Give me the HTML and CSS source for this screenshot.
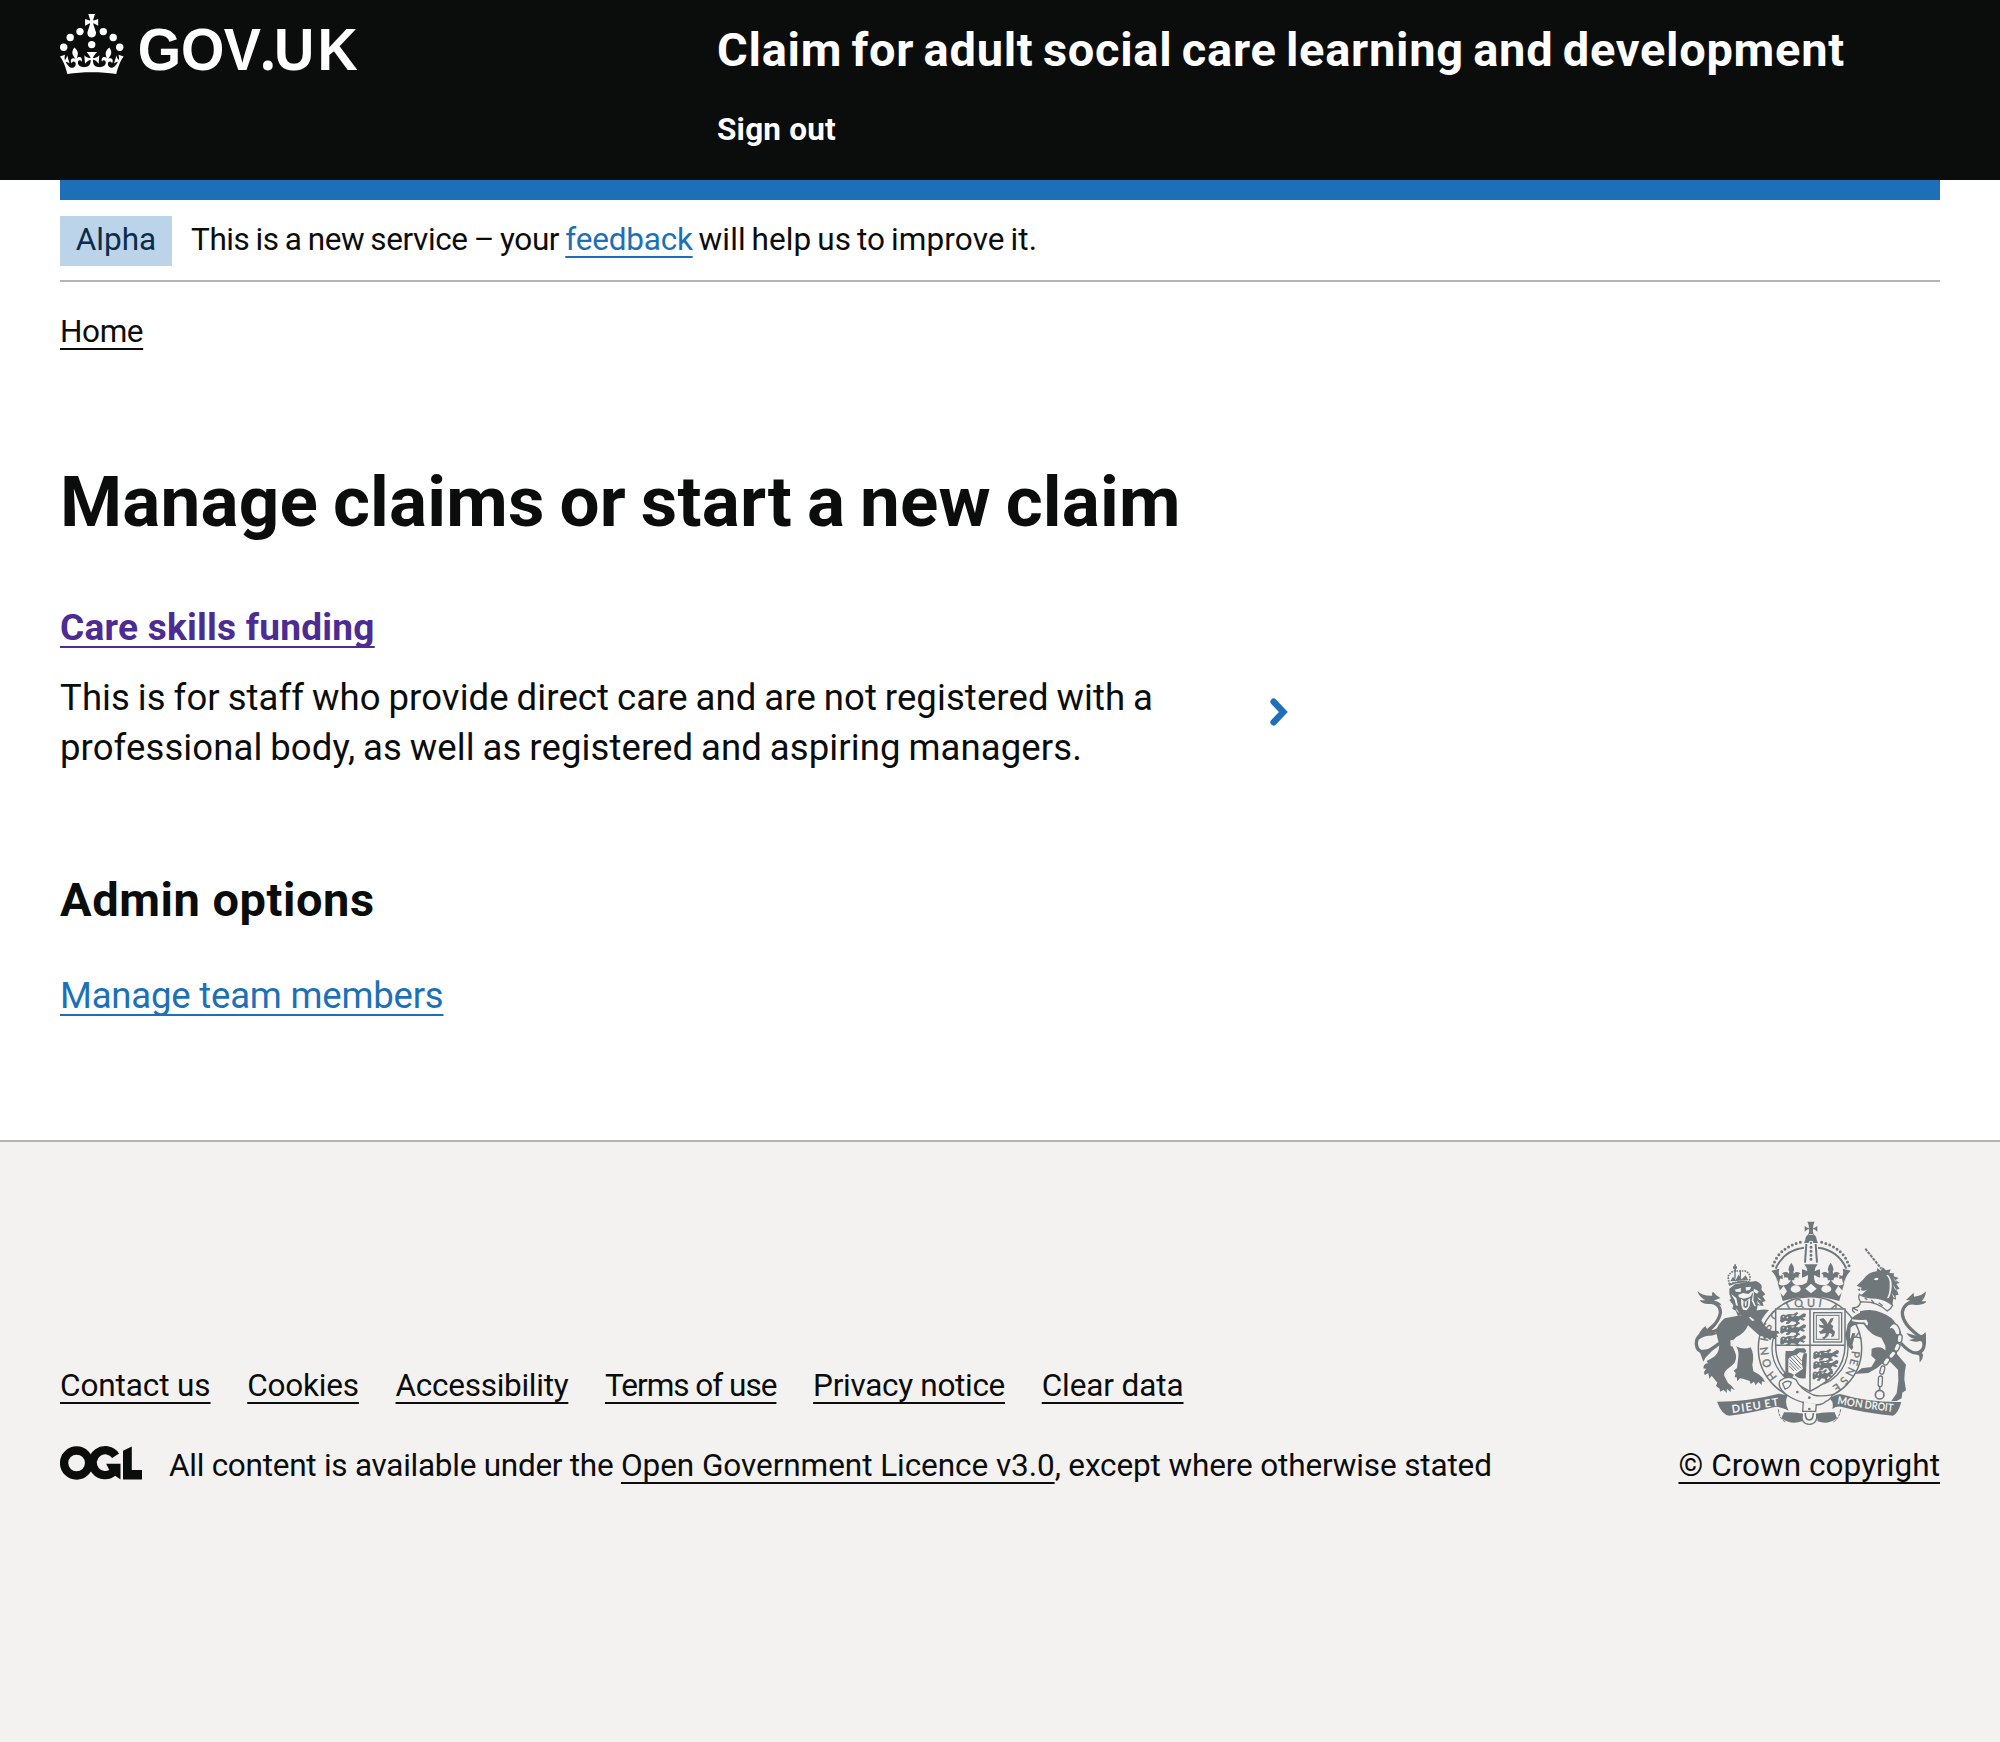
FILE: index.html
```html
<!DOCTYPE html>
<html lang="en">
<head>
<meta charset="utf-8">
<title>Manage claims or start a new claim</title>
<link rel="stylesheet" href="styles.css">
</head>
<body>
<header class="header">
  <a class="logo" href="#" aria-label="GOV.UK">
    <svg width="324" height="60" viewBox="0 0 324 60" fill="currentColor">
      <circle cx="20" cy="17.6" r="3.7"/><circle cx="10.2" cy="23.5" r="3.7"/><circle cx="3.7" cy="33.2" r="3.7"/><circle cx="31.7" cy="30.6" r="3.7"/><circle cx="43.3" cy="17.6" r="3.7"/><circle cx="53.2" cy="23.5" r="3.7"/><circle cx="59.7" cy="33.2" r="3.7"/>
      <path d="M33.1,9.8c.2-.1.3-.3.5-.5l4.6,2.4v-6.8l-4.6,1.5c-.1-.2-.3-.3-.5-.5l1.9-5.9h-6.7l1.9,5.9c-.2.1-.3.3-.5.5l-4.6-1.5v6.8l4.6-2.4c.1.2.3.3.5.5l-2.6,8c-.9,2.8,1.2,5.7,4.1,5.7h0c3,0,5.1-2.9,4.1-5.7l-2.6-8ZM37,37.9s-3.4,3.8-4.1,6.1c2.2,0,4.2-.5,6.4-2.8l-.7,8.5c-2-2.8-4.4-4.1-5.7-3.8.1,3.1.5,6.7,5.8,7.2,3.7.3,6.7-1.5,7-3.8.4-2.6-2-4.3-3.7-1.6-1.4-4.5,2.4-6.1,4.9-3.2-1.9-4.5-1.8-7.7,2.4-10.9,3,4,2.6,7.3-1.2,11.1,2.4-1.3,6.2,0,4,4.6-1.2-2.8-3.7-2.2-4.2.2-.3,1.7.7,3.7,3,4.2,1.9.3,4.7-.9,7-5.9-1.3,0-2.4.7-3.9,1.7l2.4-8c.6,2.3,1.4,3.7,2.2,4.5.6-1.6.5-2.8,0-5.3l5,1.8c-2.6,3.6-5.2,8.7-7.3,17.5-7.4-1.1-15.7-1.7-24.5-1.7h0c-8.8,0-17.1.6-24.5,1.7-2.1-8.9-4.7-13.9-7.3-17.5l5-1.8c-.5,2.5-.6,3.7,0,5.3.8-.8,1.6-2.3,2.2-4.5l2.4,8c-1.5-1-2.6-1.7-3.9-1.7,2.3,5,5.2,6.2,7,5.9,2.3-.4,3.3-2.4,3-4.2-.5-2.4-3-3.1-4.2-.2-2.2-4.6,1.6-6,4-4.6-3.7-3.7-4.2-7.1-1.2-11.1,4.2,3.2,4.3,6.4,2.4,10.9,2.5-2.8,6.3-1.3,4.9,3.2-1.8-2.7-4.1-1-3.7,1.6.3,2.3,3.3,4.1,7,3.8,5.4-.5,5.7-4.2,5.8-7.2-1.3-.2-3.7,1-5.7,3.8l-.7-8.5c2.2,2.3,4.2,2.7,6.4,2.8-.7-2.3-4.1-6.1-4.1-6.1h10.6,0Z"/>
      <text class="wordmark" transform="scale(.93 1)" y="56" x="83.5 130 176 215 230 277">GOV<tspan class="wordmark-dot">.</tspan>UK</text>
    </svg>
  </a>
  <div class="header-content">
    <a class="service-name" href="#">Claim for adult social care learning and development</a>
    <a class="sign-out" href="#">Sign out</a>
  </div>
</header>

<div class="container">
  <div class="phase-banner">
    <strong class="tag">Alpha</strong>
    <span class="phase-text"><span class="phase-lead">This is a new service – your </span><a class="link feedback" href="#">feedback</a><span class="phase-tail"> will help us to improve it.</span></span>
  </div>
  <nav class="breadcrumbs"><a class="link" href="#">Home</a></nav>
  <main class="main">
    <h1>Manage claims or start a new claim</h1>
    <section class="card">
      <div class="card-text">
        <h2 class="card-title"><a class="link" href="#">Care skills funding</a></h2>
        <p>This is for staff who provide direct care and are not registered with a<br>professional body, as well as registered and aspiring managers.</p>
      </div>
      <svg class="chevron" width="18" height="28" viewBox="0 0 18 28" fill="none" stroke="currentColor" stroke-width="6.4" stroke-linecap="round"><path d="M3.6 3.7 13.4 14 3.6 24.3"/></svg>
    </section>
    <h2 class="admin-title">Admin options</h2>
    <p class="admin-link"><a class="link" href="#">Manage team members</a></p>
  </main>
</div>

<footer class="footer">
  <div class="footer-meta">
    <ul class="footer-links">
      <li><a class="link contact" href="#">Contact us</a></li>
      <li><a class="link cookies" href="#">Cookies</a></li>
      <li><a class="link access" href="#">Accessibility</a></li>
      <li><a class="link terms" href="#">Terms of use</a></li>
      <li><a class="link privacy" href="#">Privacy notice</a></li>
      <li><a class="link clear" href="#">Clear data</a></li>
    </ul>
    <div class="licence">
      <svg class="ogl" width="82" height="34" viewBox="0 0 82 34" role="img" aria-label="OGL">
        <g fill="none" stroke="currentColor" stroke-width="8.3"><circle cx="16.6" cy="17" r="12.5"/><path d="M55.6 9.8A12.5 12.5 0 1 0 53.5 26"/></g>
        <path fill="currentColor" d="M46.2 17.8h14.3v15.6L55.5 30l-6-5.5zM63 4.8 71.8.6V24H82v9.4H63z"/>
      </svg>
      <p><span class="lic-lead">All content is available under the </span><a class="link lic-link" href="#">Open Government Licence v3.0</a><span class="lic-tail">, except where otherwise stated</span></p>
    </div>
  </div>
  <div class="copyright">
    <svg class="arms" width="232" height="205" viewBox="72 35 696 615" fill="currentColor">
      <defs>
        <g id="crown-half">
          <path d="M423 74c-10 0-17 7-17 17l-4 10h21zM423 76h-9q5-10 3-17-6 1-13 8v-17q7 6 13 7 1-9-5-20h11z"/>
          <path d="M402 115Q342 122 317 178" fill="none" stroke="currentColor" stroke-width="6"/>
          <path d="M391 99Q323 116 307 176" fill="none" stroke="currentColor" stroke-width="9" stroke-linecap="round" stroke-dasharray="0 12.6"/>
          <path d="M405 160 409 104" fill="none" stroke="currentColor" stroke-width="6"/>
          <path d="M318 205Q322 232 342 228 360 224 364 208 368 228 386 228 412 226 423 205V262Q380 262 338 275L328 238z"/>
          <path d="M364 160q-13 17-6 27-3 8-3 26h18q0-18-3-26 7-10-6-27z"/>
          <path d="M359 201q-4-21-23-9 8 3 6 13 9-4 17 6zM369 201q4-21 23-9-8 3-6 13-9-4-17 6z"/>
          <path d="M423 165h-20q8 9 9 21-7-5-16-6v25q10-3 17-8 3 10-3 22h13z"/>
          <path d="M304 184l24-6q-4 16 2 22 4-1 8-4v14q-5-3-8-2l-4 18q-6-26-22-42z"/>
        </g>
        <g id="beast">
          <path d="M0 5Q5-5 16 1q8-6 22-3l12-7 4 4-8 8 10 1 14-9 7 2-2 9-9 2 9 6-6 3-10-4-6 7q8 3 5 7l-9 1-4-8-12-1-7 7-9 1 1-6 6-2q-9-4-14 1l-5 3q-8-3-5-9z"/>
          <path class="arms-hole" d="M6 5l6-2-2 5zM20 3l4 5-5 3zM30 2l14-1-6 4z"/>
        </g>
      </defs>

      <!-- garter -->
      <g fill="none" stroke="currentColor">
        <circle cx="420" cy="417" r="155" stroke-width="4.5"/>
        <circle cx="420" cy="417" r="114" stroke-width="4"/>
      </g>
      <g class="motto garter-motto">
        <text transform="translate(322 503) rotate(232)">H</text>
        <text transform="translate(306 469) rotate(248)">O</text>
        <text transform="translate(296 436) rotate(262)">N</text>
        <text transform="translate(293 397) rotate(280)">I</text>
        <text transform="translate(300 365) rotate(294)">S</text>
        <text transform="translate(316 335) rotate(310)">O</text>
        <text transform="translate(350 304) rotate(333)">T</text>
        <text transform="translate(376 296) rotate(346)">Q</text>
        <text transform="translate(411 292)">U</text>
        <text transform="translate(444 292) rotate(10)">I</text>
        <text transform="translate(478 301) rotate(27)">A</text>
        <text transform="translate(544 376) rotate(70)">Y</text>
        <text transform="translate(546 424) rotate(96)">P</text>
        <text transform="translate(543 447) rotate(104)">E</text>
        <text transform="translate(536 471) rotate(116)">N</text>
        <text transform="translate(520 500) rotate(130)">S</text>
        <text transform="translate(502 521) rotate(145)">E</text>
      </g>

      <!-- crown -->
      <use href="#crown-half"/><use href="#crown-half" transform="matrix(-1 0 0 1 846 0)"/>
      <path d="M423 102v55" stroke="currentColor" stroke-width="9" stroke-linecap="round" stroke-dasharray="0 12" fill="none"/>
      <g class="arms-hole"><circle cx="423" cy="101" r="7"/><ellipse cx="377" cy="239" rx="15" ry="11"/><ellipse cx="469" cy="239" rx="15" ry="11"/><path d="M406 238l17-15 17 15-17 14zM327 246l14-16 10 16-11 15zM519 246l-14-16-10 16 11 15z"/></g>
      <circle cx="423" cy="101" r="3.5"/>

      <!-- shield -->
      <path class="arms-hole" d="M317 298h208v110c0 72-48 112-105 140-57-28-103-68-103-140z"/>
      <path fill="none" stroke="currentColor" stroke-width="4.5" d="M317 299h208v109c0 72-48 110-105 138-57-28-103-66-103-138zM420 299v247M317 408h208"/>
      <g fill="none" stroke="currentColor"><rect x="431" y="310" width="84" height="88" stroke-width="4"/><rect x="439" y="318" width="68" height="72" stroke-width="3"/></g>
      <use href="#beast" transform="translate(331 317)"/><use href="#beast" transform="translate(331 350)"/><use href="#beast" transform="translate(331 383)"/>
      <use href="#beast" transform="translate(430 427)"/><use href="#beast" transform="translate(430 457) scale(.98 1)"/><use href="#beast" transform="translate(428 488) scale(.8 1)"/>
      <path d="M448 330l12-4 8 8 5 10 8-16 10-3-3 9-6 9 8 8-3 8 8 8-3 14-9 3 3-10-8-3-4 10-12 9-6-5 9-5 3-9-16 3-6-8 7-1 8-8-12-3-3-9 6 2 10 1z"/>
      <path d="M347 425h22l10-8h24l6 7-4 7-16-2-10 8q-18 2-24 12v40q12 3 17 8l-6 9-12-5-9 7-8-11 9-9v-50z"/>
      <path d="M401 432q-10 26-2 46l-26 18q12 14 34 11l4-75z"/>
      <path fill="none" stroke="currentColor" stroke-width="3" d="M361 443l32 34M359 451l28 30M358 460l22 24M370 440l25 27M379 438l16 17M358 470l14 15"/>

      <!-- belt and buckle -->
      <path class="arms-hole" stroke="currentColor" stroke-width="4" d="M330 514q24-18 48-3 11 27 52 46 22 6 58-1-6 14-20 20-12 12-30 10-72-8-102-43-13-14-6-29z"/>
      <path class="arms-hole" stroke="currentColor" stroke-width="4" d="M338 523q10-12 26-4-4 17-19 20zM400 577l-2 29h39l2-22"/>
      <circle cx="382" cy="548" r="4"/><circle cx="418" cy="565" r="4"/><circle cx="418" cy="599" r="4"/>
      <path d="M342 609q37-2 57 5l-3 22q-33 12-62-9zM494 609q-37-2-55 5l4 22q30 12 58-9z"/>
      <path d="M396 612q-4 32 22 33 26-1 22-33" fill="none" stroke="currentColor" stroke-width="4"/>
      <path d="M406 611q-1 20 12 21 12-1 12-21" fill="none" stroke="currentColor" stroke-width="5"/>
      <path d="M325 600q3 30 22 38M512 600q-5 30-22 38" fill="none" stroke="currentColor" stroke-width="3" stroke-dasharray="9 3"/>

      <!-- motto scroll -->
      <path d="M139 577q95 0 188-24l27 5q-13 18 2 46-28-14-42-11-73 19-136 26-22-2-37-42zM694 578q-94 2-184-24-20 3-30 14 12 10 7 31 12-9 26-7 76 20 156 27 15-5 25-41z"/>
      <g class="motto scroll-motto"><text transform="translate(187 611) rotate(-8)" textLength="88">DIEU</text><text transform="translate(285 595) rotate(-9)" textLength="43">ET</text><text transform="translate(501 584) rotate(9)" textLength="76" lengthAdjust="spacingAndGlyphs">MON</text><text transform="translate(583 597) rotate(7)" textLength="86" lengthAdjust="spacingAndGlyphs">DROIT</text></g>

      <!-- lion -->
      <path fill="none" stroke="currentColor" stroke-width="10" d="M148 402Q118 426 102 429C74 425 72 391 94 374 122 363 146 338 151 311 153 284 130 278 106 276"/>
      <path d="M82 244q13 16 45 15-4-7 2-12 9 12 22 19-9 4-20 8 18 2 24 15-20-9-36-5-21 2-30-11 10 0 18 0-20-10-25-29zM106 351q6 13 18 11 10 2 30-15-8 20-21 23 12-1 20-5-18 15-37 14-19 2-31 13 1-30 21-41zM88 423q4 14 12 34 5-13 12-18l22-22z"/>
      <path d="M178 238l18-14 62-9q23 10 16 26l12 14-8 6 9 14-10 3 4 12-18-2-4 20-18 14-19 2-8-8-10 5-7-17-10-6 3-10-12-16 5-4-5-14z"/>
      <g class="arms-hole"><path d="M194 241l19-5-1 12-14-1zM227 234l16-2-3 9-12 3zM213 268l12 9 16-11-2 25-9 12-11-2-5-13zM205 256l14-5 16 3 12-9 3 3-10 15-18 5-15-4zM183 254l16 12 5 24-6-2-4-16zM252 238l14 8-4 7-10-5-2 25 8 18-5-1-8-16zM262 262l14 12-9-3zM262 274l10 14-9-5zM198 296l10 16-8-7z"/></g>
      <path d="M221 272l-1 19q6 10 14 0l1-19-5 4-1 13-4 1-1-15z"/>
      <path d="M178 225l-4-23q6-12 17-17l34 0q13 5 15 18l-2 15q-32-4-60 7z" fill="none" stroke="currentColor" stroke-width="5" stroke-dasharray="5 3"/>
      <path d="M181 216l8-14 8 10 9-16 9 14 12-12 8 15zM189 171h12v7h-12zM193 165h5v22h-5z"/>
      <path fill="none" stroke="currentColor" stroke-width="4" d="M177 228q30-16 63-8M195 184v24M211 183v22"/>
      <path d="M216 317l47-14q17-4 34-1-13 13-23 31 13 26 31 31l19 1 5 7-10 2 6 9-10-1 2 9-11-6-5 8-9-7-11 4-1-8-13-4-33-30q-10 25-35 35-20 15-7 38 17 32-12 52-19 13-18 25l12 23q15 10 21 22l-12-6-1 11-11-9-1 12-9-10-11 6-1-9-11-8 4-10-17-21-7 9-3-16-11 5q-5-12 5-18l-9-2q1-15 14-15l-4-7 16-9q20-8 22-38l-10-40q3-22 26-41z"/>
      <path class="arms-hole" d="M241 322l13 11-7 2-10-10zM181 393l8-1-1 20-6-2z"/>
      <path d="M198 411q23 12 44 3 12 22 5 52l3 20 15 8 13 11 7 13-9-2-1 11-10-9-8 10-5-11-10 7-3-9-20-7-9-1-8 9-2-12-6 0 3-13-6-7 10-8 4-33q2-21-7-32z"/>

      <!-- unicorn -->
      <path d="M586 118l48 60" stroke="currentColor" stroke-width="6" stroke-dasharray="9 3" fill="none"/>
      <path d="M560 229l18-17q18-25 42-26l2-10 10 8 6-10 10 9 14-3-4 11 14 1-1 9 15 5-9 6 12 9-10 3 10 14-9 3 6 15-9 2 1 13-8-3-3 19q-11 11-26 10-16-21-35-24-27-4-32-16l19-17q-15 9-22 0l5-4zM570 237l-8 4 8 4z"/>
      <path class="arms-hole" d="M611 210q8-9 15-2-5 8-15 2zM649 198q11 10 10 27 1 26-8 42l6-1q10-24 8-46-3-20-13-24zM668 204l14 16-7-5zM668 225l14 20-7-5zM665 250l11 17-6-3z"/>
      <path class="arms-hole" stroke="currentColor" stroke-width="4" d="M568 255q-5 12 4 23 46-4 80 27 12-7 16-17-18-17-49-22-36-1-51-11z"/>
      <path fill="none" stroke="currentColor" stroke-width="4" d="M572 276q-3 20-23 19-5 11 6 15M584 266l8 5M604 272l8 9M626 280l12 9M550 297l14 7"/>
      <path d="M570 306q37-9 65 4 32 12 43 34 19 22 17 43-14 22-14 47l27 32q-5 24-5 44l5 33-11 7-2 17-15 8-16 0 16-23 5-38-1-33-25-25q-14-14-13-47l-12-24q-30-4-53-40-25-4-39 10l-2 29 10 30-5 9-10-12-8-37 6-30q15-26 37-34z"/>
      <path class="arms-hole" d="M546 330q22 3 43 1 7 8 4 17l-5-1q-1-8-7-8-18 1-34-3z"/>
      <path d="M556 372l-8 32-10 11-3-8 12-36zM605 418q22-8 33-1 13 11 34 12l-4 20q-11 11-32 14l-15 13-26 15-42 3 22-17 29-4 13-22-13-12z"/>
      <path fill="none" stroke="currentColor" stroke-width="10" d="M692 401Q724 436 744 431C770 420 766 388 744 378 716 355 696 335 697 308 702 278 730 278 749 263"/>
      <path d="M768 246q-12 14-36 16l-1-12-23 22q11 0 19 2-20 6-24 19 15-10 34-6 23 1 34-11l-16 0q12-13 13-30zM766 368q-9 13-27 11l-30-8q10 16 25 17l-18 4q20 8 34 3 18 4 14 19 9-21 2-46zM733 428l15 12 1 20q11-11 10-24l-8-13z"/>
      <g class="arms-hole chain"><path d="M660 352q10-16 22-4 10 12 7 28-12 4-15-8-5-14-14-8"/><rect x="-7" y="-12" width="14" height="24" rx="7" transform="translate(689 388) rotate(8)"/><rect x="-7" y="-12" width="14" height="24" rx="7" transform="translate(681 414) rotate(24)"/><rect x="-7" y="-12" width="14" height="24" rx="7" transform="translate(667 436) rotate(42)"/><rect x="-7" y="-12" width="14" height="24" rx="7" transform="translate(649 456) rotate(35)"/><rect x="-6" y="-12" width="12" height="25" rx="6" transform="translate(637 482) rotate(14)"/><rect x="-6" y="-15" width="12" height="32" rx="6" transform="translate(631 515) rotate(3)"/></g>
      <circle cx="629" cy="556" r="13" fill="none" stroke="currentColor" stroke-width="5"/>
      <path d="M629 530v13" stroke="currentColor" stroke-width="5"/>
    </svg>
    <a class="link crown-link" href="#">© Crown copyright</a>
  </div>
</footer>
</body>
</html>
```
FILE: styles.css
```css
* { box-sizing: border-box; }
html { background: #f3f2f1; }
body {
  margin: 0;
  background: #fff;
  color: #0b0c0c;
  font-family: Roboto, "Noto Sans", sans-serif;
  font-size: 31.5px;
  line-height: 40px;
}
h1, h2, p, ul { margin: 0; padding: 0; }
a { color: inherit; text-decoration: none; }
.link {
  text-decoration: underline;
  text-decoration-thickness: 2px;
  text-underline-offset: 6px;
  text-decoration-skip-ink: none;
}

.header {
  display: grid;
  grid-template-columns: 657px 1fr;
  height: 180px;
  padding: 14px 60px 0;
  background: #0b0c0c;
  color: #fff;
  font-weight: 700;
}
.logo svg { display: block; overflow: visible; }
.wordmark { font: 700 60px "Liberation Sans", Arial, sans-serif; }
.wordmark-dot { font-family: "Noto Sans", sans-serif; }
.header-content {
  display: flex;
  flex-direction: column;
  align-items: flex-start;
  padding-top: 11px;
  gap: 35px;
}
.service-name { font-size: 47px; line-height: 50px; letter-spacing: .72px; word-spacing: -3px; white-space: nowrap; }
.sign-out { letter-spacing: .2px; }

.container { margin: 0 60px; border-top: 20px solid #1d70b8; }
.phase-banner {
  display: flex;
  gap: 19px;
  padding: 16px 0 14px;
  border-bottom: 2px solid #b1b4b6;
  line-height: 48px;
}
.tag {
  width: 112px;
  height: 50px;
  background: #bbd4ea;
  color: #0c2d4a;
  font-weight: 400;
  text-align: center;
}
.phase-text { height: 50px; white-space: pre; }
.phase-lead { letter-spacing: -.4px; word-spacing: -1.3px; }
.feedback { color: #1d70b8; letter-spacing: -.2px; }
.phase-tail { letter-spacing: .1px; word-spacing: -2px; }
.breadcrumbs { padding-top: 30px; letter-spacing: -.4px; }

.main { padding: 110px 0 119px; }
h1 { font-size: 71px; line-height: 80px; letter-spacing: .2px; word-spacing: -3px; }
.card { display: flex; align-items: center; margin-top: 61px; }
.card-text { width: 1210px; }
.card-title {
  margin-bottom: 20px;
  color: #4c2c92;
  font-size: 37px;
  line-height: 50px;
  letter-spacing: .25px;
}
.card-text p { font-size: 36.5px; line-height: 50px; letter-spacing: .1px; word-spacing: -1.3px; }
.chevron { margin-top: 48px; color: #1d70b8; }
.admin-title { margin-top: 102px; font-size: 47px; line-height: 50px; letter-spacing: .55px; }
.admin-link { margin-top: 46px; color: #1d70b8; font-size: 36.5px; line-height: 50px; letter-spacing: -.2px; }

.footer {
  display: flex;
  justify-content: space-between;
  align-items: flex-end;
  height: 602px;
  padding: 0 60px 256px;
  border-top: 2px solid #b1b4b6;
  background: #f3f2f1;
}
.footer-links { display: flex; gap: 36.7px; margin-bottom: 40px; list-style: none; }
.contact { letter-spacing: -.1px; }
.cookies { letter-spacing: -.2px; }
.access { letter-spacing: -.27px; }
.terms { letter-spacing: -1px; }
.privacy { letter-spacing: -.3px; }
.clear { letter-spacing: -.1px; }
.licence { display: flex; gap: 27px; }
.licence p { white-space: nowrap; }
.lic-lead { letter-spacing: -.26px; }
.lic-link { letter-spacing: -.06px; }
.lic-tail { letter-spacing: -.14px; }
.copyright { display: flex; flex-direction: column; align-items: flex-end; gap: 20px; }
.crown-link { letter-spacing: .04px; }
.arms { margin-right: 14px; color: #6f777b; }
.arms-hole { fill: #f3f2f1; }
.chain > * { fill: #f3f2f1; stroke: #6f777b; stroke-width: 4px; }
.motto { font-family: Lato, sans-serif; font-weight: 700; }
.garter-motto { font-size: 33px; font-weight: 400; stroke: #6f777b; stroke-width: 1px; }
.scroll-motto { font-size: 33px; fill: #f3f2f1; }
```
